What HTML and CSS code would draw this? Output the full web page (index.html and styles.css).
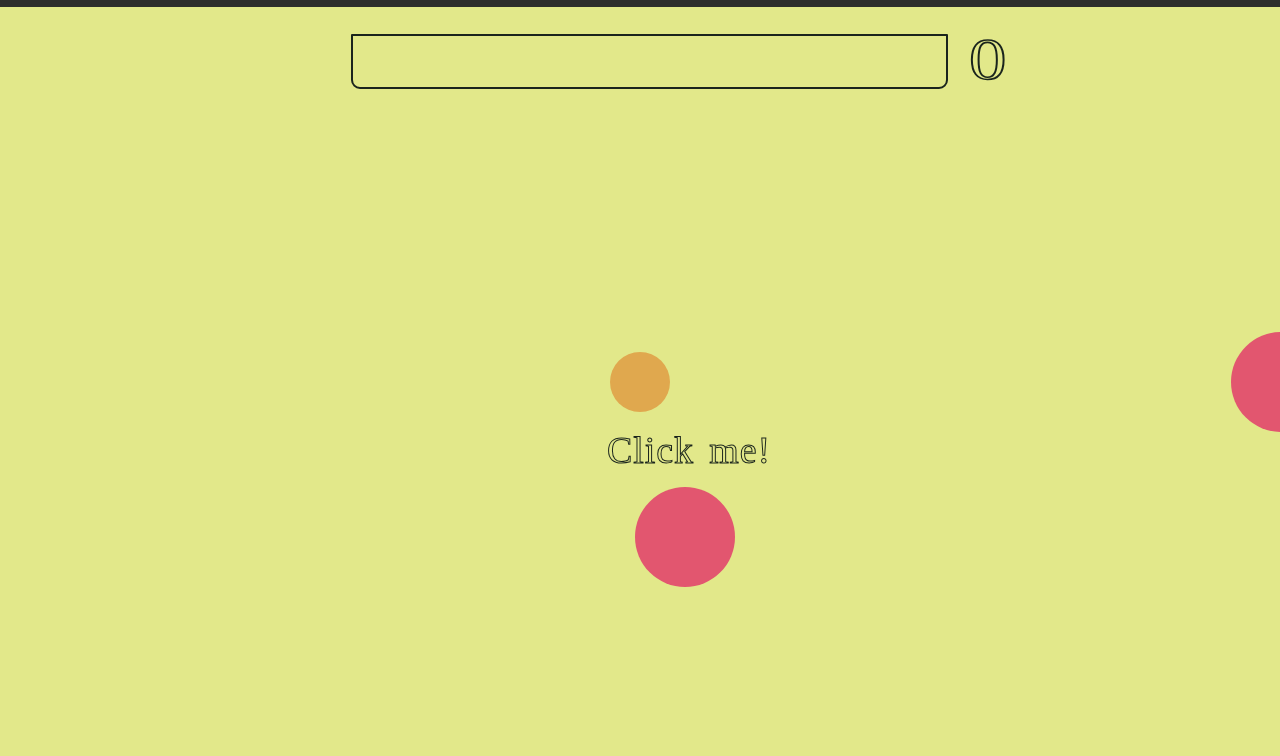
FILE: index.html
```html
<!DOCTYPE html>
<html lang="en">
<head>
    <meta charset="UTF-8">
    <meta name="viewport" content="width=device-width, initial-scale=1.0">
    <title>Click me</title>
    <link rel="stylesheet" href="styles.css">
</head>
<body>
    <div class="top-bar"></div>

    <!-- Progress and score -->
    <header class="status">
        <div class="progress"></div>
        <div class="score">0</div>
    </header>

    <!-- Game canvas -->
    <main class="game">
        <div class="ball ball-small"></div>
        <div class="ball ball-big ball-edge"></div>
        <div class="prompt">Click me!</div>
        <div class="ball ball-big ball-target"></div>
    </main>
</body>
</html>
```

FILE: styles.css
```css
:root {
    --ink: #1a241c;
    --background-color: #e2e88a;
    --pink: #e2566f;
    --orange: #e0a84e;
}

html, body {
    height: 100%;
}

body {
    margin: 0;
    display: flex;
    flex-direction: column;
    overflow: hidden;
    background-color: var(--background-color);
    font-family: "Liberation Serif", serif;
}

.top-bar {
    height: 7px;
    background-color: #2e2e2c;
}

.status {
    display: flex;
    align-items: flex-start;
    gap: 21px;
    padding: 27px 0 0 351px;
}

.progress {
    width: 593px;
    height: 51px;
    border: 2px solid var(--ink);
    border-radius: 1px 1px 9px 9px;
}

.score {
    margin-top: -4px;
    font-size: 59px;
    line-height: 59px;
    color: var(--background-color);
    -webkit-text-stroke: 1.6px var(--ink);
    transform: scaleX(1.27);
    transform-origin: left center;
}

.game {
    position: relative;
    flex: 1;
}

.ball {
    position: absolute;
    border-radius: 50%;
}

.ball-small {
    left: 610px;
    top: 263px;
    width: 60px;
    height: 60px;
    background-color: var(--orange);
}

.ball-big {
    width: 100px;
    height: 100px;
    background-color: var(--pink);
}

.ball-edge {
    left: 1231px;
    top: 243px;
}

.ball-target {
    left: 635px;
    top: 398px;
}

.prompt {
    position: absolute;
    left: 607px;
    top: 336px;
    font-size: 38px;
    line-height: 50px;
    letter-spacing: 0.9px;
    word-spacing: 5px;
    color: var(--background-color);
    -webkit-text-stroke: 1px var(--ink);
    transform: translateZ(0);
}
```
